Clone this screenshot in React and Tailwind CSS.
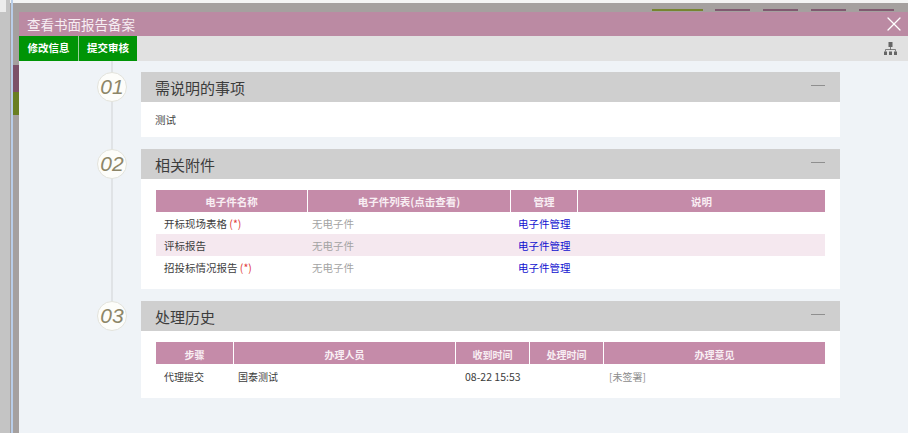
import React from "react";
import { X } from "lucide-react";

const attachments = [
  { name: "开标现场表格", required: true, shaded: false },
  { name: "评标报告", required: false, shaded: true },
  { name: "招投标情况报告", required: true, shaded: false },
];

const Section = ({ num, title, children }) => (
  <div className="flex items-start">
    <div className="w-[30px] h-[30px] mr-[14px] rounded-full bg-[#fdfdfa] border border-[#e3e3dc] flex items-center justify-center text-[21px] italic text-[#8d8668] font-['Liberation_Sans',sans-serif] z-10">
      {num}
    </div>
    <div className="w-[699px]">
      <div className="h-[30px] bg-[#cfcfcf] flex items-center justify-between pl-[14px] pr-[15px]">
        <span className="text-[15px] text-[#3c3c3c] pt-[2px]">{title}</span>
        <span className="w-[14px] h-px bg-[#8f8f8f] mb-[4px]"></span>
      </div>
      <div className="bg-white">{children}</div>
    </div>
  </div>
);

const HeadCell = ({ small, children }) => (
  <div
    className={
      small
        ? "h-[22px] pt-[2px] bg-[#c58ba9] border-l border-white first:border-l-0 flex items-center justify-center text-[10px] font-bold text-[#f8eef3]"
        : "h-[22px] pt-[2px] bg-[#c58ba9] border-l border-white first:border-l-0 flex items-center justify-center text-[10.5px] font-bold text-[#f8eef3]"
    }
  >
    {children}
  </div>
);

export default function App() {
  return (
    <div className="relative w-[908px] h-[433px] overflow-hidden bg-[#a5a09f] font-['Noto_Sans_CJK_SC','Liberation_Sans',sans-serif]">
      {/* dimmed page behind the dialog */}
      <div className="absolute left-0 top-0 w-full h-[3px] bg-[#f4f4f4]"></div>
      <div className="absolute left-0 top-0 w-[10px] h-full bg-[#c4c4c4]"></div>
      <div className="absolute left-0 top-0 w-[6px] h-[12px] bg-[#ececec]"></div>
      <div className="absolute left-[11px] top-0 w-[2px] h-full bg-[#b9cde8]"></div>
      <div className="absolute left-[13px] top-[65px] w-[6px] h-[27px] bg-[#7c5068]"></div>
      <div className="absolute left-[13px] top-[92px] w-[6px] h-[23px] bg-[#6a7f22]"></div>
      <div className="absolute left-[652px] top-[9px] w-[51px] h-[2px] bg-[#76842f]"></div>
      <div className="absolute left-[715px] top-[9px] w-[35px] h-[2px] bg-[#7f5a70]"></div>
      <div className="absolute left-[763px] top-[9px] w-[35px] h-[2px] bg-[#7f5a70]"></div>
      <div className="absolute left-[811px] top-[9px] w-[35px] h-[2px] bg-[#7f5a70]"></div>
      <div className="absolute left-[859px] top-[9px] w-[35px] h-[2px] bg-[#7f5a70]"></div>

      {/* dialog */}
      <div className="absolute left-[19px] top-[12px] right-0 bottom-0 flex flex-col bg-[#eff3f7]">
        <div className="h-[24px] shrink-0 bg-[#bb8aa3] flex items-center justify-between pl-[8px] pr-[2px]">
          <span className="text-[13.5px] text-[#f7eef3]">查看书面报告备案</span>
          <X size={24} strokeWidth={1.3} className="text-white" />
        </div>
        <div className="h-[25px] shrink-0 bg-[#e1e1e1] flex items-center justify-between pr-[11px]">
          <div className="flex h-full">
            <div className="w-[60px] pb-[2px] bg-[#009406] border-r border-[#9ad09c] flex items-center justify-center text-[10.5px] font-bold text-white">
              修改信息
            </div>
            <div className="w-[58px] pb-[2px] bg-[#009406] flex items-center justify-center text-[10.5px] font-bold text-white">
              提交审核
            </div>
          </div>
          <svg width="13" height="13" viewBox="0 0 13 13" className="text-[#666666]">
            <rect x="4.5" y="0" width="4" height="5" fill="currentColor" />
            <path d="M6.5 5V8M1.5 9.5V7.5H11.5V9.5" fill="none" stroke="currentColor" strokeWidth="0.8" />
            <rect x="0" y="9.5" width="3" height="3.5" fill="currentColor" />
            <rect x="5" y="9.5" width="3" height="3.5" fill="currentColor" />
            <rect x="10" y="9.5" width="3" height="3.5" fill="currentColor" />
          </svg>
        </div>

        <div className="relative flex-1 flex flex-col gap-[12px] pt-[11px] pl-[78px]">
          <div className="absolute left-[92px] top-0 w-[2px] h-[257px] bg-[#e0e3e6]"></div>

          <Section num="01" title="需说明的事项">
            <div className="h-[35px] pl-[14px] flex items-center text-[10.5px] text-[#444444]">测试</div>
          </Section>

          <Section num="02" title="相关附件">
            <div className="px-[15px] py-[11px]">
              <div className="grid grid-cols-[151px_203px_67px_248px]">
                <HeadCell>电子件名称</HeadCell>
                <HeadCell>电子件列表(点击查看)</HeadCell>
                <HeadCell>管理</HeadCell>
                <HeadCell>说明</HeadCell>
              </div>
              {attachments.map((row) => (
                <div
                  key={row.name}
                  className={
                    row.shaded
                      ? "grid grid-cols-[151px_203px_67px_248px] h-[22px] pt-[2px] items-center text-[10.5px] bg-[#f5e8ef]"
                      : "grid grid-cols-[151px_203px_67px_248px] h-[22px] pt-[2px] items-center text-[10.5px]"
                  }
                >
                  <div className="pl-[8px] text-[#3d3d3d]">
                    {row.name}
                    {row.required && <span className="text-[#e03a3a]"> (*)</span>}
                  </div>
                  <div className="pl-[5px] text-[#a3a3a3]">无电子件</div>
                  <div className="pl-[8px] text-[#1010d0]">电子件管理</div>
                  <div></div>
                </div>
              ))}
            </div>
          </Section>

          <Section num="03" title="处理历史">
            <div className="px-[15px] py-[11px]">
              <div className="grid grid-cols-[77px_222px_74px_74px_222px]">
                <HeadCell small>步骤</HeadCell>
                <HeadCell small>办理人员</HeadCell>
                <HeadCell small>收到时间</HeadCell>
                <HeadCell small>处理时间</HeadCell>
                <HeadCell small>办理意见</HeadCell>
              </div>
              <div className="grid grid-cols-[77px_222px_74px_74px_222px] h-[23px] pt-[2px] items-center text-[10px] text-[#3d3d3d]">
                <div className="pl-[8px]">代理提交</div>
                <div className="pl-[5px]">国泰测试</div>
                <div className="pl-[10px] text-[10.5px]">08-22 15:53</div>
                <div></div>
                <div className="pl-[6px] text-[#8c8c8c]">[未签署]</div>
              </div>
            </div>
          </Section>
        </div>
      </div>
    </div>
  );
}
